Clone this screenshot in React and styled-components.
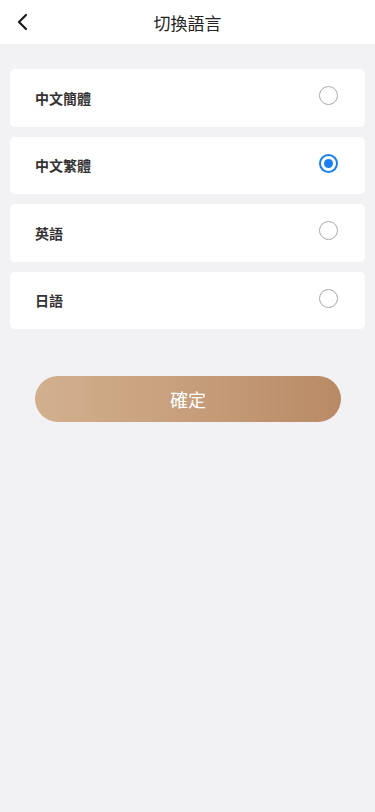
import React, { useState } from "react";
import styled, { createGlobalStyle } from "styled-components";

const Global = createGlobalStyle`
  html, body { margin: 0; padding: 0; background: #f2f2f4; }
  body { font-family: "Noto Sans CJK TC", "Noto Sans CJK SC", sans-serif; }
  * { box-sizing: border-box; }
`;

const Page = styled.div`
  min-height: 812px;
  background: #f2f2f4;
`;

const Header = styled.div`
  height: 44px;
  background: #fff;
  display: flex;
  align-items: center;
  justify-content: center;
  position: relative;
`;

const Back = styled.button`
  position: absolute;
  left: 9px;
  top: 8px;
  width: 28px;
  height: 28px;
  border: none;
  background: none;
  padding: 0;
  display: flex;
  align-items: center;
  justify-content: center;
`;

const Title = styled.div`
  font-size: 17px;
  color: #222;
`;

const List = styled.div`
  display: flex;
  flex-direction: column;
  gap: 10px;
  padding: 25px 10px 0;
`;

const Card = styled.div`
  height: 57.5px;
  background: #fff;
  border-radius: 5px;
  display: flex;
  align-items: center;
  justify-content: space-between;
  padding: 0 27px 0 25px;
`;

const Label = styled.div`
  font-size: 14px;
  font-weight: 700;
  color: #333;
`;

const Radio = styled.div`
  width: 19px;
  height: 19px;
  border-radius: 50%;
  border: 1px solid ${(p) => (p.$on ? "#1a7ff0" : "#a9a9a9")};
  border-width: ${(p) => (p.$on ? "2px" : "1px")};
  display: flex;
  align-items: center;
  justify-content: center;
  margin-top: -4px;
  &::after {
    content: "";
    display: ${(p) => (p.$on ? "block" : "none")};
    width: 9px;
    height: 9px;
    border-radius: 50%;
    background: #1a7ff0;
  }
`;

const ButtonWrap = styled.div`
  padding: 47px 34px 0 35px;
`;

const Confirm = styled.button`
  width: 100%;
  height: 46px;
  border: none;
  border-radius: 23px;
  background: linear-gradient(90deg, #d2b08e 0%, #c9a27f 40%, #b98a66 100%);
  color: #fff;
  font-size: 18px;
  font-family: "Noto Sans CJK TC", sans-serif;
`;

const langs = ["中文簡體", "中文繁體", "英語", "日語"];

export default function App() {
  const [sel, setSel] = useState(1);
  return (
    <Page>
      <Global />
      <Header>
        <Back>
          <svg width="14" height="18" viewBox="0 0 14 18">
            <path d="M10 2 L3 9 L10 16" fill="none" stroke="#1a1a1a" strokeWidth="2.2" strokeLinecap="round" strokeLinejoin="round" />
          </svg>
        </Back>
        <Title>切換語言</Title>
      </Header>
      <List>
        {langs.map((l, i) => (
          <Card key={l} onClick={() => setSel(i)}>
            <Label>{l}</Label>
            <Radio $on={sel === i} />
          </Card>
        ))}
      </List>
      <ButtonWrap>
        <Confirm>確定</Confirm>
      </ButtonWrap>
    </Page>
  );
}
